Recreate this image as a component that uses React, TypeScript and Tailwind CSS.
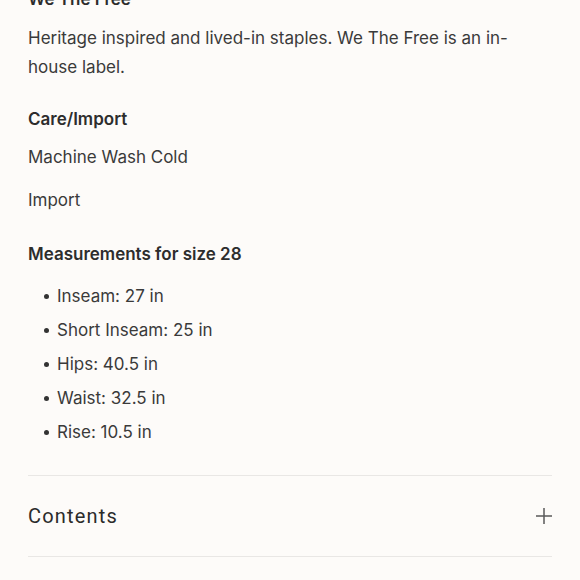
const measurements = [
  "Inseam: 27 in",
  "Short Inseam: 25 in",
  "Hips: 40.5 in",
  "Waist: 32.5 in",
  "Rise: 10.5 in",
];

export default function App() {
  return (
    <div className="h-[580px] w-[580px] overflow-hidden bg-[#fdfbf9] font-['Inter',sans-serif] text-[#2d2d2d]">
      <div className="-mt-[13px] px-[28px]">
        <h3 className="text-[17px] font-semibold leading-[24px]">We The Free</h3>
        <p className="mt-[12.5px] text-[17px] leading-[29px] text-[#3a3a3a]">
          Heritage inspired and lived-in staples. We The Free is an in-house label.
        </p>

        <h3 className="mt-[25px] text-[17px] font-semibold leading-[24px]">Care/Import</h3>
        <p className="mt-[12.5px] text-[17px] leading-[29px] text-[#3a3a3a]">Machine Wash Cold</p>
        <p className="mt-[14px] text-[17px] leading-[29px] text-[#3a3a3a]">Import</p>

        <h3 className="mt-[26.5px] text-[17px] font-semibold leading-[24px]">
          Measurements for size 28
        </h3>
        <ul className="mt-[16.5px] flex flex-col gap-[5px]">
          {measurements.map((m) => (
            <li key={m} className="flex items-center text-[17px] leading-[29px] text-[#3a3a3a]">
              <span className="ml-[16px] mr-[8px] h-[5px] w-[5px] rounded-full bg-[#333]" />
              {m}
            </li>
          ))}
        </ul>

        <div className="mt-[27.5px] border-y border-[#e9e7e5]">
          <button className="flex h-[80px] w-full items-center justify-between">
            <span className="font-['Roboto',sans-serif] text-[20px] tracking-[0.06em] text-[#2b2b2b]">
              Contents
            </span>
            <svg width="16" height="16" viewBox="0 0 16 16" className="mr-[0px]" aria-hidden>
              <path d="M8 0v16M0 8h16" stroke="#5a5a5a" strokeWidth="1.5" fill="none" />
            </svg>
          </button>
        </div>
      </div>
    </div>
  );
}
